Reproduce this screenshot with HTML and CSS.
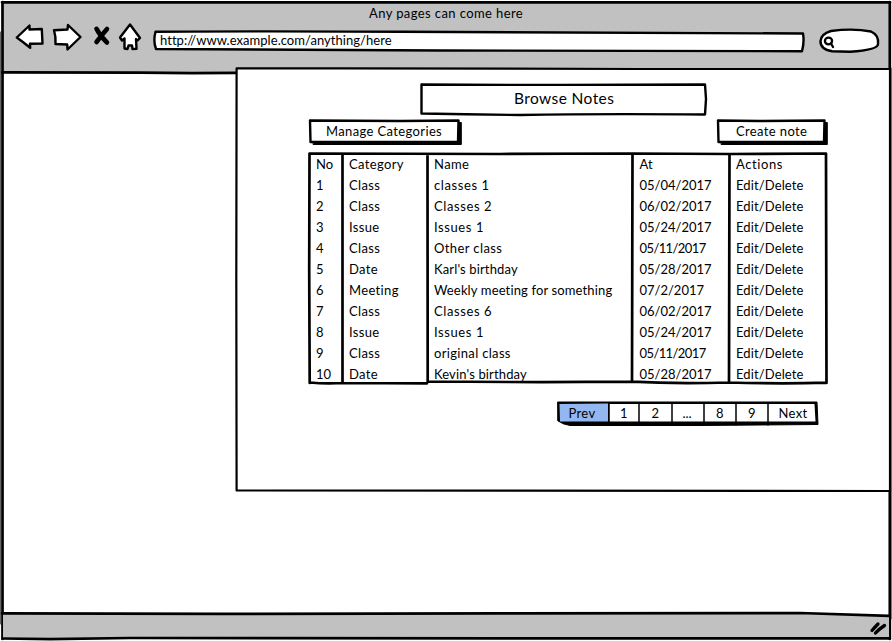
FILE: index.html
```html
<!DOCTYPE html>
<html lang="en">
<head>
<meta charset="utf-8">
<title>Browse Notes</title>
<link rel="stylesheet" href="styles.css">
</head>
<body>
<div class="browser">
  <header class="chrome">
    <svg class="ink" viewBox="0 0 892 76" width="892" height="76">
      <path class="gray" d="M2 2H890V69L236 70V73L2 72Z"/>
      <path class="line" d="M2 2.300H890M2 72.300L140 72.600L192 73.200L237 72.800"/>
    </svg>
    <div class="title">Any pages can come here</div>
    <div class="toolbar">
      <svg class="nav" viewBox="12 18 134 36" width="134" height="36">
        <path class="shape" d="M16.800 37.500L29.500 25.500V29.500L41.800 29L42.500 43.500L30 43.800L30.200 47.800Q23 42 16.800 37.500Z"/>
        <path class="shape" d="M54 30.200L67.500 29.500L68 25L80.500 37L67.500 49.500L67.200 44.500L55.500 44Q56 37 54 30.200Z"/>
        <path class="cross" d="M96.500 28.800Q100 36 107 42.500M107 29Q101 36 96.500 42"/>
        <path class="shape" d="M130 24.500L140 38L137.500 40.500L136 39L136.500 48.800L132.500 49L132 45.500L128.500 45.500L127.500 49L124.500 48.500L124.500 38.500L122 40.500L120 37.500Z"/>
      </svg>
      <div class="address">
        <svg class="ink" viewBox="152 28 656 28" width="656" height="28">
          <path class="shape" d="M155.500 31.800Q240 31 400 31.700T803 33.500Q804.500 42 802 51.200Q600 51.500 440 50.500T156 49Q153 41 155.500 31.800Z"/>
        </svg>
        <span>http://www.example.com/anything/here</span>
      </div>
      <svg class="search" viewBox="816 26 66 30" width="66" height="30">
        <path class="shape" d="M831 31Q853 28 871 31.500Q879 35 878 44Q878 50 850 51.800L832 51.300Q820 49 820.500 41Q821 34 831 31Z"/>
        <ellipse class="lens" cx="828.500" cy="41" rx="3.600" ry="3.300"/><path class="lens" d="M831 43.500L833 47"/>
      </svg>
    </div>
  </header>

  <main class="page">
    <svg class="ink" viewBox="0 0 892 641" width="892" height="641">
      <path class="line" d="M2.500 2V639M889.800 2V639"/>
      <path class="edge" d="M.5 32V624M891.700 68V619"/>
    </svg>
    <section class="panel">
      <svg class="ink" viewBox="234 66 658 428" width="658" height="428">
        <path class="paper" d="M236.600 68.300L340 68.300L640 69L890 69L890 491L236.600 490.500L236.300 280Z"/>
      </svg>
      <h1 class="heading">
        <svg class="ink" viewBox="418 81 292 36" width="292" height="36">
          <path class="box" d="M421.500 84.500Q560 85.300 705 84.500L706 99L705 114.500Q600 113.500 520 115Q470 114.500 421.500 113.500Z"/>
        </svg>
        <span>Browse Notes</span>
      </h1>
      <div class="actions">
        <button class="btn manage">
          <svg class="ink" viewBox="308 118 156 29" width="156" height="29">
            <path class="solid" d="M313.500 142L458 141V122.500L461.300 122.500V144.500L313.500 144.500Z"/>
            <path class="box" d="M310 120.500L400 121L458.500 120.500L458 142L310.500 142Z"/>
          </svg>
          <span>Manage Categories</span>
        </button>
        <button class="btn create">
          <svg class="ink" viewBox="716 118 114 29" width="114" height="29">
            <path class="solid" d="M721.500 142L824 141V122.500L827.300 122.500V144.500L721.500 144.500Z"/>
            <path class="box" d="M718 120.500L760 121L824.500 120.500L824 142L718.500 142Z"/>
          </svg>
          <span>Create note</span>
        </button>
      </div>
      <div class="table">
        <svg class="ink" viewBox="306 150 524 236" width="524" height="236">
          <path class="line" d="M309.500 153.500L500 154L632 153.500L730 154L826 153.500M309.500 153.500L309.200 270L309.700 383M342.500 154V383M427.500 154L427.700 382M632.500 154L632 382M729.500 154L729 382M826 153.500L826.500 383M310 382.500Q325 384 343 383L427 383.300M428 381.500Q530 382.500 632 381.700Q675 384 729 382.500Q780 384 826.500 382.700"/>
        </svg>
        <div class="col no"><b>No</b><b>1</b><b>2</b><b>3</b><b>4</b><b>5</b><b>6</b><b>7</b><b>8</b><b>9</b><b>10</b></div>
        <div class="col cat"><b>Category</b><b>Class</b><b>Class</b><b>Issue</b><b>Class</b><b>Date</b><b>Meeting</b><b>Class</b><b>Issue</b><b>Class</b><b>Date</b></div>
        <div class="col name"><b>Name</b><b class="wide">classes 1</b><b class="wide">Classes 2</b><b class="wide">Issues 1</b><b>Other class</b><b class="tight">Karl's birthday</b><b class="tight">Weekly meeting for something</b><b class="wide">Classes 6</b><b class="wide">Issues 1</b><b class="snug">original class</b><b class="tight">Kevin's birthday</b></div>
        <div class="col at"><b>At</b><b>05/04/2017</b><b>06/02/2017</b><b>05/24/2017</b><b class="ones">05/11/2017</b><b>05/28/2017</b><b>07/2/2017</b><b>06/02/2017</b><b>05/24/2017</b><b class="ones">05/11/2017</b><b>05/28/2017</b></div>
        <div class="col act"><b class="wide">Actions</b><b>Edit/Delete</b><b>Edit/Delete</b><b>Edit/Delete</b><b>Edit/Delete</b><b>Edit/Delete</b><b>Edit/Delete</b><b>Edit/Delete</b><b>Edit/Delete</b><b>Edit/Delete</b><b>Edit/Delete</b></div>
      </div>
      <nav class="pager">
        <svg class="ink" viewBox="556 399 264 30" width="264" height="30">
          <path class="solid" d="M558 402L817 402L818 424.500L700 425.500H570Q563 424.500 558 421Z"/>
          <path class="white" d="M609 404H814.500L815.500 421.500H609Z"/>
          <path class="blue" d="M559.500 404L608 403.500V421.500H560Z"/>
          <path class="thin" d="M609 403V425M639 403V425M672 403V425M704 403V425M736 403V425M768 403V425"/>
        </svg>
        <span class="prev">Prev</span><span>1</span><span>2</span><span class="dots">...</span><span>8</span><span>9</span><span class="next">Next</span>
      </nav>
    </section>
  </main>

  <footer class="status">
    <svg class="ink" viewBox="0 609 892 32" width="892" height="32">
      <path class="gray" d="M3 613.500H800L889 616V638.500L3 638Z"/>
      <path class="line" d="M2 613.300L220 613.900L500 613.300L800 613L889 615.800M2.500 638.500L50 639.200L130 638L500 638.300L889.800 638.300"/>
      <path class="grip" d="M872 630.500Q875 627 878 624M875.500 633Q879 629 884.500 625.500"/>
    </svg>
  </footer>
</div>
</body>
</html>
```
FILE: styles.css
```css
* { box-sizing: border-box; }
body {
  margin: 0;
  background: #fff;
  color: #000;
  font: 13px/21px Lato, "Liberation Sans", sans-serif;
  letter-spacing: .4px;
  white-space: nowrap;
}
.browser {
  position: relative;
  display: flex;
  flex-direction: column;
  width: 892px;
  height: 641px;
  overflow: hidden;
}
svg { display: block; }
.ink { position: absolute; left: 0; top: 0; }
svg path, svg ellipse { stroke-linecap: round; stroke-linejoin: round; }
.gray { fill: #c1c1c1; }
.line { fill: none; stroke: #000; stroke-width: 2.7; }
.edge { fill: none; stroke: #666; stroke-width: 1; }
.shape { fill: #fff; stroke: #000; stroke-width: 2.4; }
.cross { fill: none; stroke: #000; stroke-width: 4.600; }
.lens { fill: none; stroke: #000; stroke-width: 2.3; }
.paper { fill: #fff; stroke: #000; stroke-width: 2.2; }
.box { fill: #fff; stroke: #000; stroke-width: 2.4; }
.solid { fill: #000; stroke: #000; stroke-width: 1; }
.white { fill: #fff; }
.blue { fill: #93b8f1; }
.thin { fill: none; stroke: #000; stroke-width: 1.500; }
.grip { fill: none; stroke: #000; stroke-width: 3.3; }

.chrome { position: relative; height: 74px; flex: none; }
.title { position: relative; padding: 3px 0 0 369px; height: 18px; line-height: 20px; }
.toolbar { position: relative; display: flex; align-items: flex-start; padding-left: 12px; }
.nav { flex: none; }
.address { position: relative; width: 656px; height: 28px; margin: 10px 0 0 6px; padding-left: 8px; line-height: 25px; letter-spacing: .04px; }
.address span { position: relative; }
.search { flex: none; margin: 8px 0 0 8px; }

.page { flex: 1; }
.panel { position: absolute; left: 234px; top: 66px; width: 658px; height: 428px; }
.heading {
  position: relative;
  width: 292px;
  height: 36px;
  margin: 15px 0 0 184px;
  font-size: 15.500px;
  font-weight: 400;
  line-height: 35px;
  padding-left: 96px;
}
.heading span, .btn span, .col, .pager span { position: relative; }
.actions { display: flex; justify-content: space-between; width: 522px; margin: 1px 0 0 74px; }
.btn {
  position: relative;
  height: 29px;
  padding: 0 0 2px 18px;
  border: 0;
  background: none;
  color: inherit;
  font: inherit;
  letter-spacing: .37px;
  text-align: left;
}
.manage { width: 156px; }
.create { width: 114px; padding-left: 20px; }
.table {
  position: relative;
  display: grid;
  grid-template-columns: 33px 85px 205.500px 96.500px 96px;
  width: 524px;
  height: 236px;
  margin: 3px 0 0 72px;
  padding: 4px 0 0 10px;
}
.col { display: flex; flex-direction: column; }
.col b { font-weight: 400; height: 21px; }
.no, .at { letter-spacing: 0; }
.cat { letter-spacing: .35px; }
.at .ones { letter-spacing: -.6px; }
.act { letter-spacing: .12px; }
.col .wide { letter-spacing: .6px; }
.name .tight { letter-spacing: .14px; }
.name .snug { letter-spacing: .33px; }
.pager {
  position: relative;
  display: grid;
  grid-template-columns: 51px 30px 33px 32px 32px 32px 48px;
  width: 264px;
  height: 30px;
  margin: 13px 0 0 322px;
  padding-left: 2px;
  line-height: 29px;
  text-align: center;
}
.prev, .next { letter-spacing: .3px; }
.prev { padding-right: 3px; }
.next { padding-left: 2px; }
.dots { letter-spacing: 0; padding-right: 2px; }
.status { position: relative; flex: none; height: 32px; }
```
